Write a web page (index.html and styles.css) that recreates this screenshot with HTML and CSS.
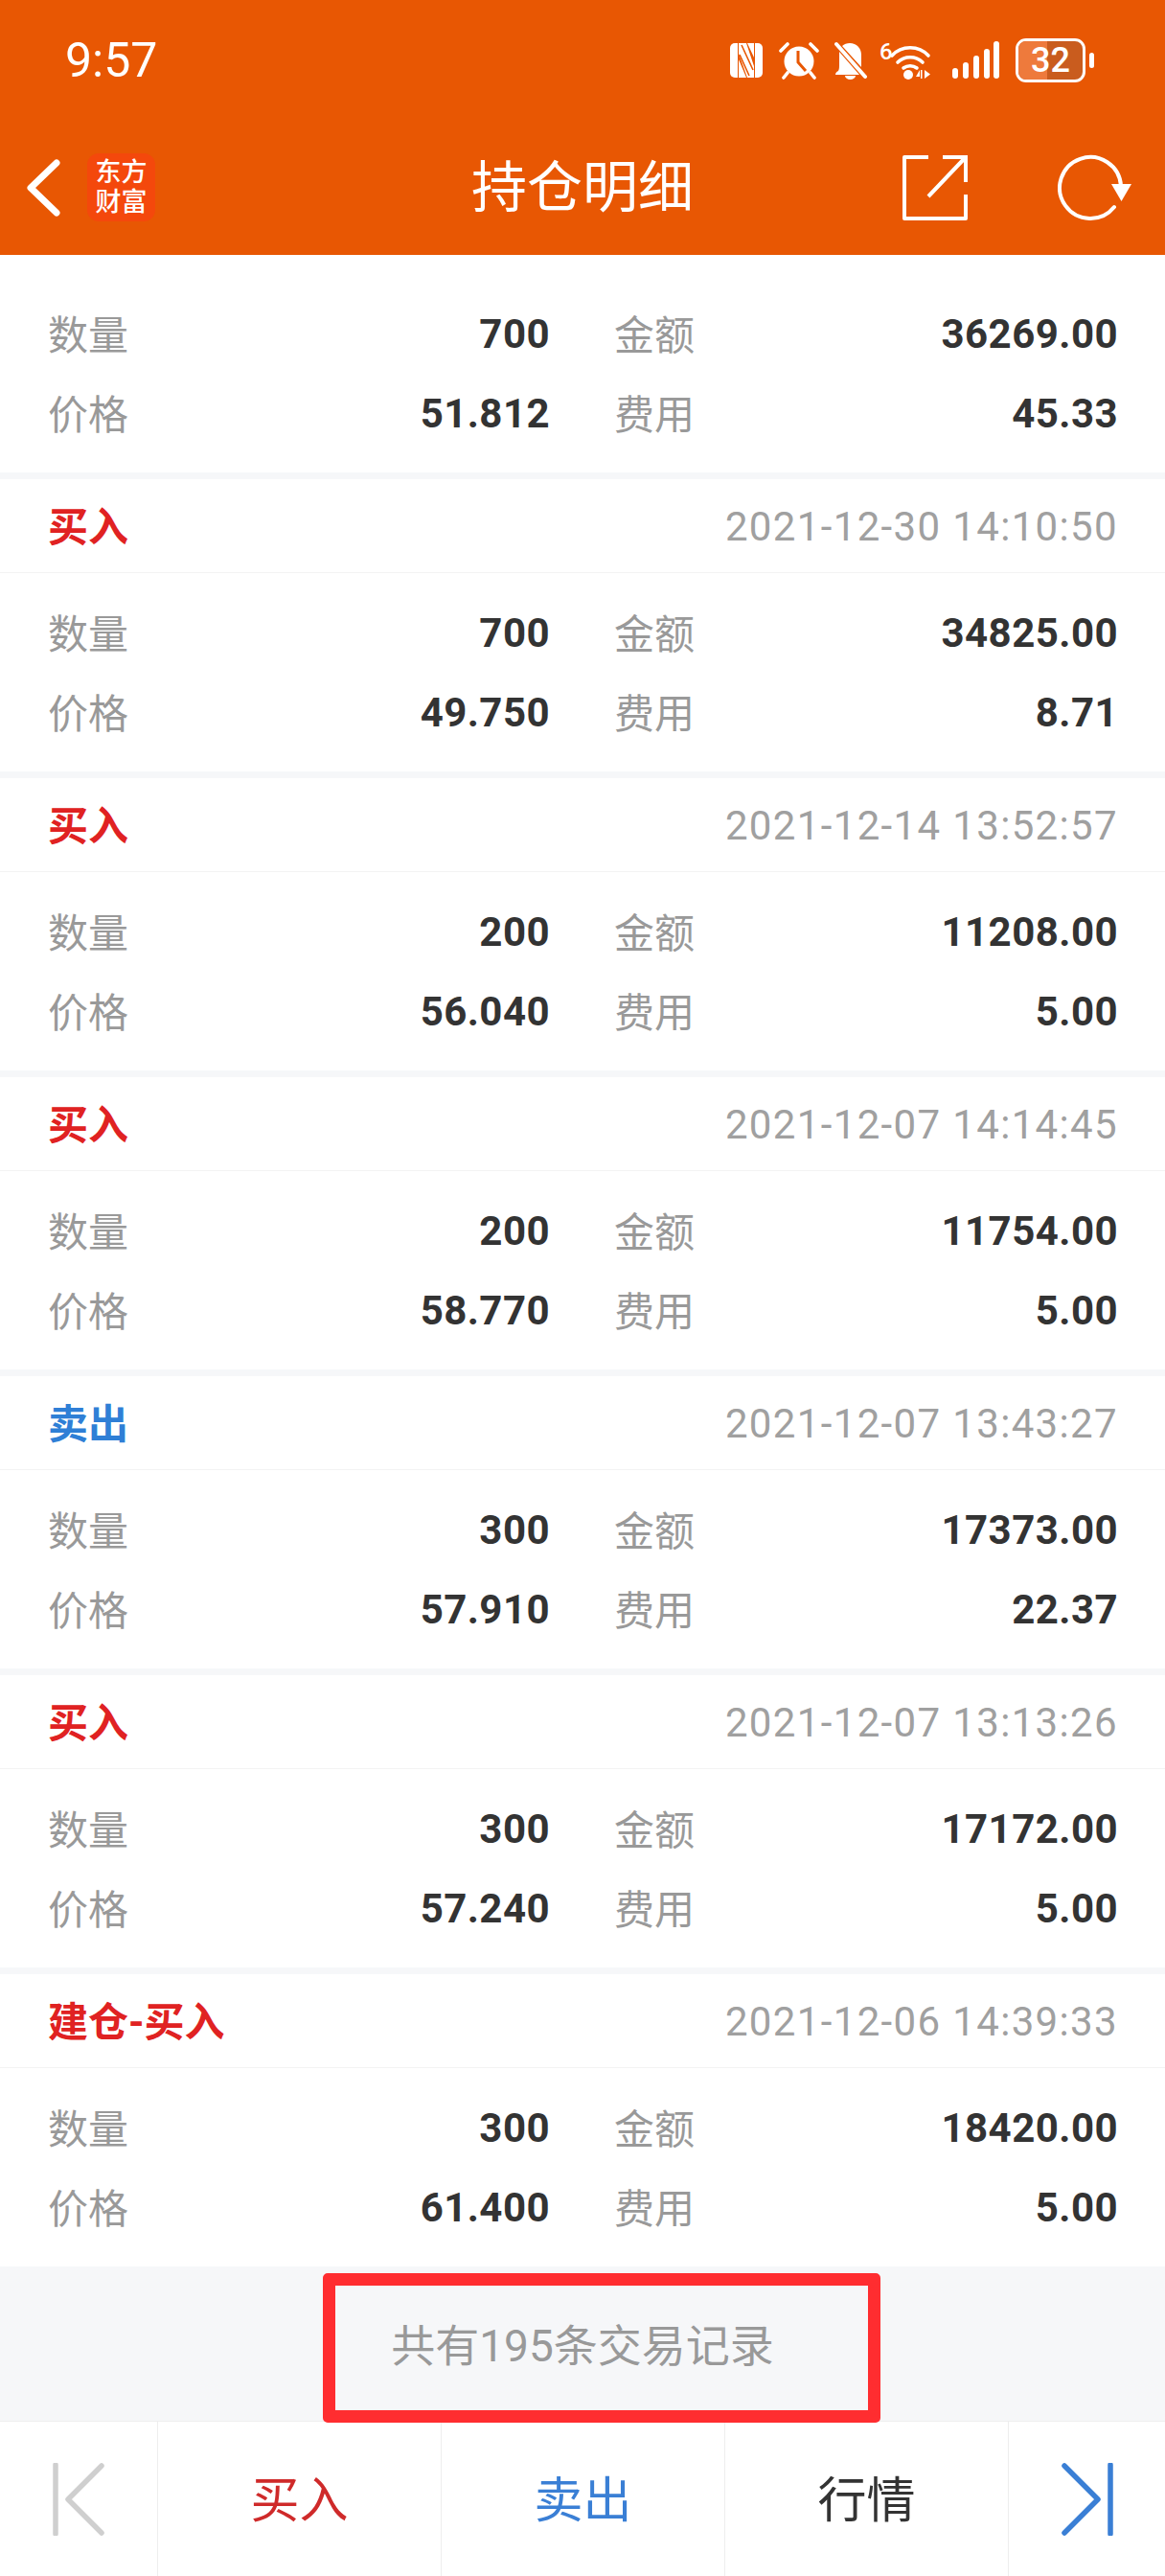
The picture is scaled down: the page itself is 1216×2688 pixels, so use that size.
FILE: index.html
```html
<!DOCTYPE html>
<html lang="zh-CN">
<head>
  <meta charset="UTF-8" />
  <title>持仓明细</title>
  <link rel="stylesheet" href="styles.css">
</head>
<body>
  <div class="page">
    <header class="header">
      <div class="status">
        <div class="time">9:57</div>
        <div class="status-icons">
          <svg width="36" height="38" viewBox="0 0 36 38"><path d="M9 1H6a5 5 0 0 0-5 5v26a5 5 0 0 0 5 5h3z" fill="#fff"/><path d="M27 1h3a5 5 0 0 1 5 5v26a5 5 0 0 1-5 5h-3z" fill="#fff"/><path d="M10 1h8l8 24v12h-7L10 12zM10 18l8 19h-8zM26 1v15L19 1z" fill="#fff"/><path d="M11 13l10 22M13 3l12 26" stroke="#e85703" stroke-width="1.6" fill="none"/></svg>
          <svg width="42" height="40" viewBox="0 0 42 40"><circle cx="21" cy="21" r="15.5" fill="#fff"/><path d="M20 10v12l8 9" stroke="#e85703" stroke-width="3" fill="none"/><path d="M2 10l7-7M40 10l-7-7M9 33l-4 5M33 33l4 5" stroke="#fff" stroke-width="3.6" stroke-linecap="round"/></svg>
          <svg width="34" height="40" viewBox="0 0 34 40"><path d="M16 2c7 0 12 5 12 12v13l-20-22c2-2 5-3 8-3zM5 11l21 24H1c0-2 1-3 3-4 1-2 1-4 1-7z" fill="#fff"/><path d="M11 36h11a5.500 4 0 0 1-11 0z" fill="#fff"/><path d="M2 3l30 34" stroke="#fff" stroke-width="4" stroke-linecap="round"/></svg>
          <div class="wifi">
            <span class="wifi-six">6</span>
            <svg width="44" height="40" viewBox="10 0 44 40"><path d="M13 15c10-11 28-11 38 0M19 22c7-7 19-7 26 0M25 28c4-3 10-3 14 0" stroke="#fff" stroke-width="3.600" fill="none" stroke-linecap="round"/><circle cx="30" cy="35" r="5" fill="#fff"/><path d="M42 30l-4 7h4zM43 30v9h1.500v-9zM47 30v9l6-4.500z" fill="#fff"/></svg>
          </div>
          <svg width="49" height="40" viewBox="0 0 49 40"><rect x="0" y="28" width="6" height="11" rx="3" fill="#fff"/><rect x="11" y="22" width="6" height="17" rx="3" fill="#fff"/><rect x="22" y="15" width="6" height="24" rx="3" fill="#fff"/><rect x="33" y="8" width="6" height="31" rx="3" fill="#fff"/><rect x="43" y="0" width="6" height="39" rx="3" fill="#fff"/></svg>
          <div class="battery">
            <div class="battery-box"><span class="battery-fill"></span><span class="battery-num">32</span></div>
            <span class="battery-nub"></span>
          </div>
        </div>
      </div>
      <div class="nav">
        <div class="nav-left">
          <svg width="38" height="62" viewBox="0 0 38 62"><path d="M33 5L6 31l27 26" stroke="#fff" stroke-width="7" fill="none" stroke-linecap="round" stroke-linejoin="round"/></svg>
          <div class="logo"><span>东方</span><span>财富</span></div>
        </div>
        <div class="nav-title">持仓明细</div>
        <div class="nav-right">
          <svg width="68" height="68" viewBox="0 0 68 68"><path d="M27 2H2v64h64V41" stroke="#fff" stroke-width="4" fill="none" stroke-linejoin="round"/><path d="M27 43L65 3M42 2h24v26" stroke="#fff" stroke-width="4" fill="none"/></svg>
          <svg width="78" height="70" viewBox="0 0 78 70"><path d="M59 55A32 32 0 1 1 66 33" stroke="#fff" stroke-width="4" fill="none" stroke-linecap="round"/><path d="M56 31h21l-10.500 18z" fill="#fff"/></svg>
        </div>
      </div>
    </header>

    <main class="list">
      <section class="card card-cut">
        <div class="card-body">
          <div class="cell"><span class="label">数量</span><span class="value">700</span></div>
          <div class="cell"><span class="label">金额</span><span class="value">36269.00</span></div>
          <div class="cell"><span class="label">价格</span><span class="value">51.812</span></div>
          <div class="cell"><span class="label">费用</span><span class="value">45.33</span></div>
        </div>
      </section>
      <section class="card">
        <div class="card-head"><span class="kind buy">买入</span><span class="date">2021-12-30 14:10:50</span></div>
        <div class="card-body">
          <div class="cell"><span class="label">数量</span><span class="value">700</span></div>
          <div class="cell"><span class="label">金额</span><span class="value">34825.00</span></div>
          <div class="cell"><span class="label">价格</span><span class="value">49.750</span></div>
          <div class="cell"><span class="label">费用</span><span class="value">8.71</span></div>
        </div>
      </section>
      <section class="card">
        <div class="card-head"><span class="kind buy">买入</span><span class="date">2021-12-14 13:52:57</span></div>
        <div class="card-body">
          <div class="cell"><span class="label">数量</span><span class="value">200</span></div>
          <div class="cell"><span class="label">金额</span><span class="value">11208.00</span></div>
          <div class="cell"><span class="label">价格</span><span class="value">56.040</span></div>
          <div class="cell"><span class="label">费用</span><span class="value">5.00</span></div>
        </div>
      </section>
      <section class="card">
        <div class="card-head"><span class="kind buy">买入</span><span class="date">2021-12-07 14:14:45</span></div>
        <div class="card-body">
          <div class="cell"><span class="label">数量</span><span class="value">200</span></div>
          <div class="cell"><span class="label">金额</span><span class="value">11754.00</span></div>
          <div class="cell"><span class="label">价格</span><span class="value">58.770</span></div>
          <div class="cell"><span class="label">费用</span><span class="value">5.00</span></div>
        </div>
      </section>
      <section class="card">
        <div class="card-head"><span class="kind sell">卖出</span><span class="date">2021-12-07 13:43:27</span></div>
        <div class="card-body">
          <div class="cell"><span class="label">数量</span><span class="value">300</span></div>
          <div class="cell"><span class="label">金额</span><span class="value">17373.00</span></div>
          <div class="cell"><span class="label">价格</span><span class="value">57.910</span></div>
          <div class="cell"><span class="label">费用</span><span class="value">22.37</span></div>
        </div>
      </section>
      <section class="card">
        <div class="card-head"><span class="kind buy">买入</span><span class="date">2021-12-07 13:13:26</span></div>
        <div class="card-body">
          <div class="cell"><span class="label">数量</span><span class="value">300</span></div>
          <div class="cell"><span class="label">金额</span><span class="value">17172.00</span></div>
          <div class="cell"><span class="label">价格</span><span class="value">57.240</span></div>
          <div class="cell"><span class="label">费用</span><span class="value">5.00</span></div>
        </div>
      </section>
      <section class="card card-last">
        <div class="card-head"><span class="kind buy">建仓-买入</span><span class="date">2021-12-06 14:39:33</span></div>
        <div class="card-body">
          <div class="cell"><span class="label">数量</span><span class="value">300</span></div>
          <div class="cell"><span class="label">金额</span><span class="value">18420.00</span></div>
          <div class="cell"><span class="label">价格</span><span class="value">61.400</span></div>
          <div class="cell"><span class="label">费用</span><span class="value">5.00</span></div>
        </div>
      </section>
    </main>

    <div class="total">
      <span class="total-text">共有195条交易记录</span>
      <div class="mark"></div>
    </div>

    <nav class="toolbar">
      <div class="tool">
        <svg width="54" height="76" viewBox="0 0 54 76"><path d="M3 2v72M51 3L16 38l35 35" stroke="#cfcfcf" stroke-width="5.500" fill="none" stroke-linecap="round" stroke-linejoin="round"/></svg>
      </div>
      <div class="tool tool-text buy-text">买入</div>
      <div class="tool tool-text sell-text">卖出</div>
      <div class="tool tool-text">行情</div>
      <div class="tool">
        <svg width="54" height="76" viewBox="0 0 54 76"><path d="M51 2v72M3 3l35 35L3 73" stroke="#3a7fd5" stroke-width="5.500" fill="none" stroke-linecap="round" stroke-linejoin="round"/></svg>
      </div>
    </nav>
  </div>
</body>
</html>
```

FILE: styles.css
```css
* {
  box-sizing: border-box;
}

body {
  margin: 0;
  background: #fff;
  font-family: Roboto, "Noto Sans CJK SC", sans-serif;
}

.page {
  width: 1216px;
  height: 2688px;
  overflow: hidden;
  display: flex;
  flex-direction: column;
}

.header {
  height: 266px;
  background: #e85703;
  color: #fff;
}

.status {
  height: 125px;
  padding: 0 74px 0 68px;
  display: flex;
  justify-content: space-between;
  align-items: center;
}

.time {
  font-size: 50px;
  font-weight: 400;
  line-height: 1;
}

.status-icons {
  display: flex;
  align-items: center;
}

.status-icons > svg {
  margin-right: 16px;
}

.wifi {
  display: flex;
  width: 54px;
  height: 40px;
  margin-left: -3px;
  margin-right: 22px;
}

.wifi-six {
  width: 10px;
  height: 22px;
  font-size: 24px;
  font-weight: 500;
  line-height: 22px;
}

.battery {
  display: flex;
  align-items: center;
  margin-left: 1px;
}

.battery-box {
  position: relative;
  width: 73px;
  height: 46px;
  border: 3px solid #fff;
  border-radius: 11px;
  background: #c95c1e;
  display: flex;
  justify-content: center;
  align-items: center;
}

.battery-fill {
  position: absolute;
  left: 0;
  top: 0;
  bottom: 0;
  width: 30px;
  background: #ee7a3c;
  border-radius: 8px 0 0 8px;
}

.battery-num {
  position: relative;
  font-size: 36px;
  font-weight: 500;
  line-height: 40px;
}

.battery-nub {
  width: 5px;
  height: 16px;
  margin-left: 4px;
  background: #fff;
  border-radius: 3px;
}

.nav {
  position: relative;
  height: 141px;
  padding: 0 34px 0 26px;
  display: flex;
  justify-content: space-between;
  align-items: center;
}

.nav-left {
  display: flex;
  align-items: center;
}

.logo {
  width: 71px;
  height: 71px;
  margin-left: 27px;
  background: #f4480c;
  border-radius: 12px;
  display: flex;
  flex-direction: column;
  justify-content: center;
  align-items: center;
  font-size: 27px;
  font-weight: 500;
  line-height: 31px;
}

.nav-title {
  position: absolute;
  left: 0;
  right: 0;
  text-align: center;
  font-size: 58px;
  line-height: 1;
}

.nav-right {
  display: flex;
  align-items: center;
  gap: 94px;
}

.list {
  background: #f6f7f9;
}

.card {
  background: #fff;
  margin-bottom: 7px;
}

.card-last {
  margin-bottom: 0;
}

.card-head {
  height: 98px;
  padding: 0 49px 0 50px;
  border-bottom: 1px solid #f3f3f3;
  display: flex;
  justify-content: space-between;
  align-items: center;
}

.kind {
  padding-bottom: 4px;
  font-size: 42px;
  font-weight: 700;
}

.buy {
  color: #e02222;
}

.sell {
  color: #2f7fd6;
}

.date {
  padding-top: 2px;
  font-size: 42px;
  color: #a0a0a0;
  letter-spacing: 1.35px;
}

.card-body {
  height: 207px;
  padding: 21px 49px 0 50px;
  display: grid;
  grid-template-columns: 524px 526px;
  grid-auto-rows: 83px;
  column-gap: 67px;
}

.card-cut .card-body {
  height: 227px;
  padding-top: 41px;
}

.cell {
  display: flex;
  justify-content: space-between;
  align-items: center;
}

.label {
  padding-bottom: 4px;
  font-size: 42px;
  color: #999;
}

.value {
  font-size: 42px;
  font-weight: 700;
  color: #333;
  letter-spacing: 0.45px;
}

.total {
  position: relative;
  height: 161px;
  background: #f6f7f9;
  color: #999;
  font-size: 46px;
  display: flex;
  justify-content: center;
  align-items: center;
}

.total-text {
  padding-bottom: 4px;
}

/* red box drawn over the screenshot */
.mark {
  position: absolute;
  left: 337px;
  top: 7px;
  width: 582px;
  height: 156px;
  border: 13px solid #ff2d30;
  border-radius: 5px;
  z-index: 1;
}

.toolbar {
  flex: 1;
  background: #fff;
  border-top: 1px solid #eee;
  display: grid;
  grid-template-columns: 164px 1fr 1fr 1fr 164px;
  font-size: 51px;
  color: #333;
}

.tool {
  display: flex;
  justify-content: center;
  align-items: center;
  border-left: 1px solid #eee;
}

.tool:first-child {
  border-left: none;
}

.tool-text {
  padding-bottom: 5px;
}

.buy-text {
  color: #cf2a2a;
}

.sell-text {
  color: #3a7fd5;
}
```
